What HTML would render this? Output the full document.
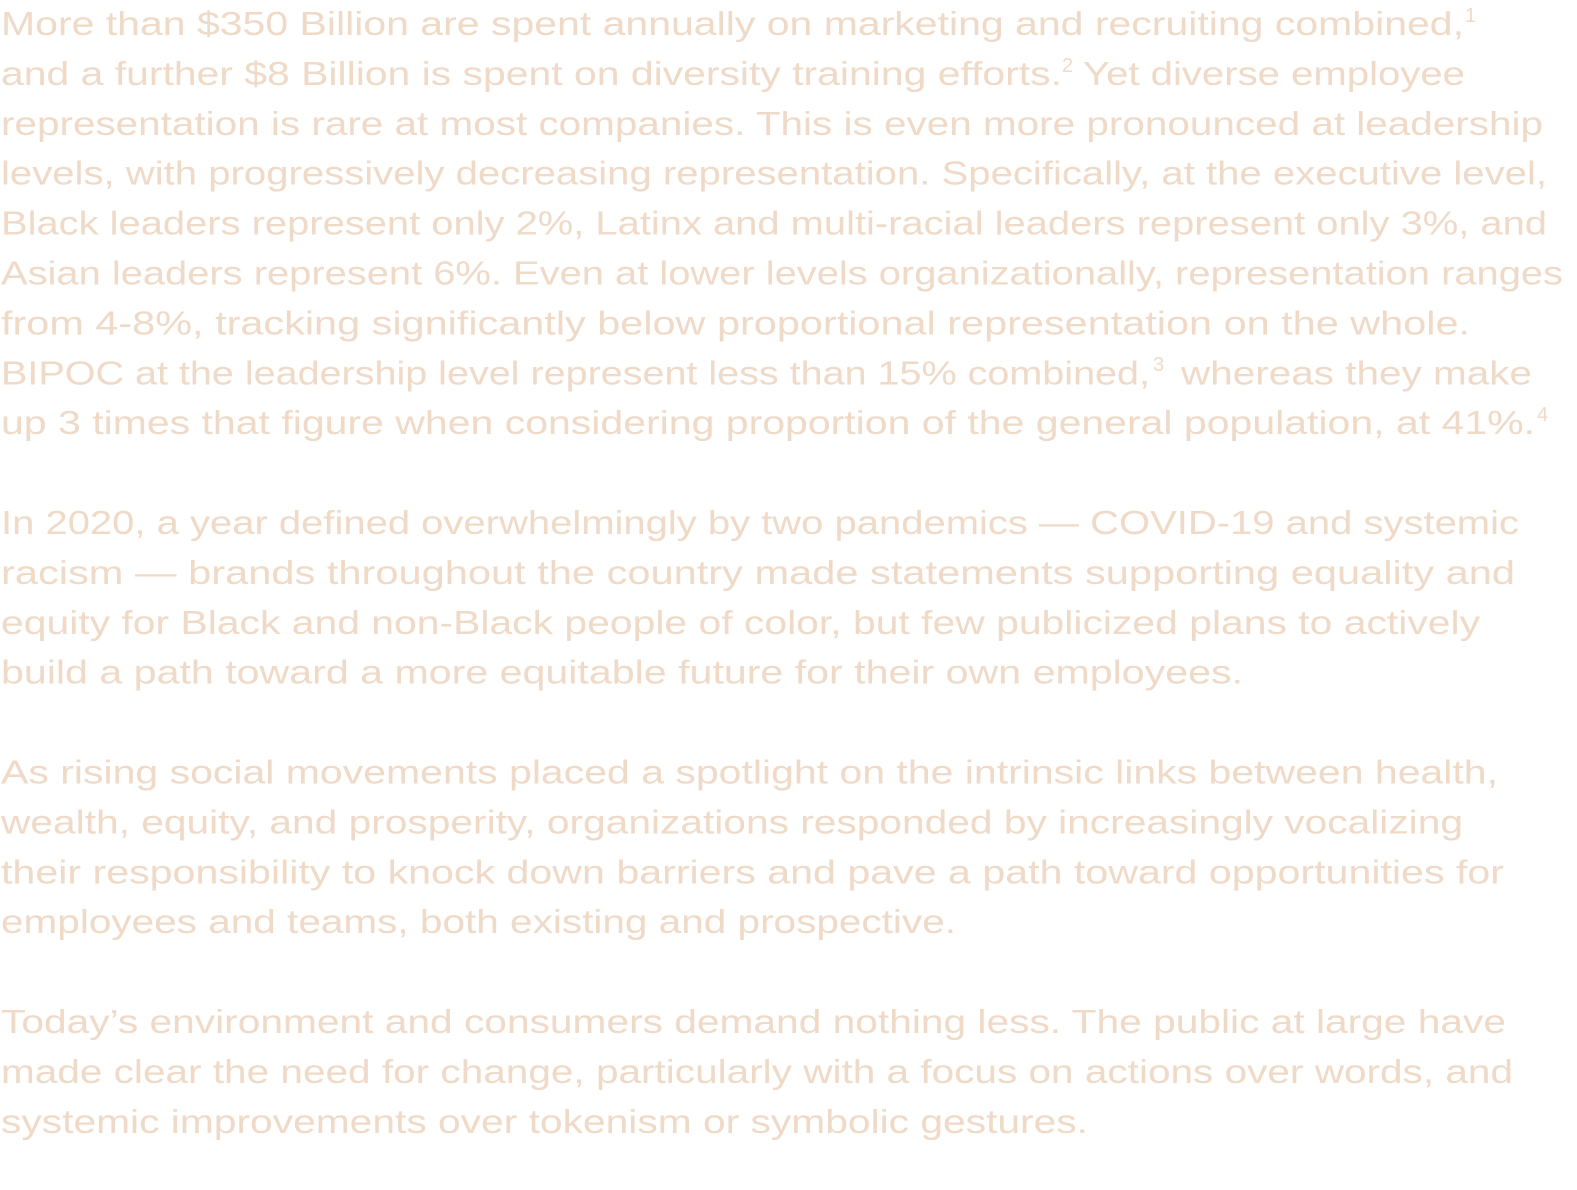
<!DOCTYPE html>
<html><head><meta charset="utf-8"><style>
html,body{margin:0;padding:0;background:#fff;width:1577px;height:1190px;overflow:hidden}
svg{display:block}
text{font-family:"Liberation Sans",sans-serif;font-size:33px;fill:#efd9c7}
.s{font-size:20px}
</style></head><body>
<svg width="1577" height="1190" xmlns="http://www.w3.org/2000/svg">
<text x="1" y="35" textLength="1463" lengthAdjust="spacingAndGlyphs">More than $350 Billion are spent annually on marketing and recruiting combined,</text>
<text class="s" x="1465" y="22">1</text>
<text x="1" y="84.9" textLength="1061" lengthAdjust="spacingAndGlyphs">and a further $8 Billion is spent on diversity training efforts.</text>
<text class="s" x="1062" y="72">2</text>
<text x="1083" y="84.9" textLength="382" lengthAdjust="spacingAndGlyphs">Yet diverse employee</text>
<text x="1" y="134.8" textLength="1542" lengthAdjust="spacingAndGlyphs">representation is rare at most companies. This is even more pronounced at leadership</text>
<text x="1" y="184.7" textLength="1546" lengthAdjust="spacingAndGlyphs">levels, with progressively decreasing representation. Specifically, at the executive level,</text>
<text x="1" y="234.6" textLength="1546" lengthAdjust="spacingAndGlyphs">Black leaders represent only 2%, Latinx and multi-racial leaders represent only 3%, and</text>
<text x="1" y="284.5" textLength="1562" lengthAdjust="spacingAndGlyphs">Asian leaders represent 6%. Even at lower levels organizationally, representation ranges</text>
<text x="1" y="334.4" textLength="1469" lengthAdjust="spacingAndGlyphs">from 4-8%, tracking significantly below proportional representation on the whole.</text>
<text x="1" y="384.3" textLength="1149" lengthAdjust="spacingAndGlyphs">BIPOC at the leadership level represent less than 15% combined,</text>
<text class="s" x="1153" y="371">3</text>
<text x="1181" y="384.3" textLength="351" lengthAdjust="spacingAndGlyphs">whereas they make</text>
<text x="1" y="434.2" textLength="1534" lengthAdjust="spacingAndGlyphs">up 3 times that figure when considering proportion of the general population, at 41%.</text>
<text class="s" x="1537" y="421">4</text>
<text x="1" y="534" textLength="1518" lengthAdjust="spacingAndGlyphs">In 2020, a year defined overwhelmingly by two pandemics — COVID-19 and systemic</text>
<text x="1" y="583.9" textLength="1514" lengthAdjust="spacingAndGlyphs">racism — brands throughout the country made statements supporting equality and</text>
<text x="1" y="633.8" textLength="1479" lengthAdjust="spacingAndGlyphs">equity for Black and non-Black people of color, but few publicized plans to actively</text>
<text x="1" y="683.7" textLength="1242" lengthAdjust="spacingAndGlyphs">build a path toward a more equitable future for their own employees.</text>
<text x="1" y="783.5" textLength="1497" lengthAdjust="spacingAndGlyphs">As rising social movements placed a spotlight on the intrinsic links between health,</text>
<text x="1" y="833.4" textLength="1462" lengthAdjust="spacingAndGlyphs">wealth, equity, and prosperity, organizations responded by increasingly vocalizing</text>
<text x="1" y="883.3" textLength="1503" lengthAdjust="spacingAndGlyphs">their responsibility to knock down barriers and pave a path toward opportunities for</text>
<text x="1" y="933.2" textLength="955" lengthAdjust="spacingAndGlyphs">employees and teams, both existing and prospective.</text>
<text x="1" y="1033" textLength="1505" lengthAdjust="spacingAndGlyphs">Today’s environment and consumers demand nothing less. The public at large have</text>
<text x="1" y="1082.9" textLength="1512" lengthAdjust="spacingAndGlyphs">made clear the need for change, particularly with a focus on actions over words, and</text>
<text x="1" y="1132.8" textLength="1087" lengthAdjust="spacingAndGlyphs">systemic improvements over tokenism or symbolic gestures.</text>
</svg>
</body></html>
